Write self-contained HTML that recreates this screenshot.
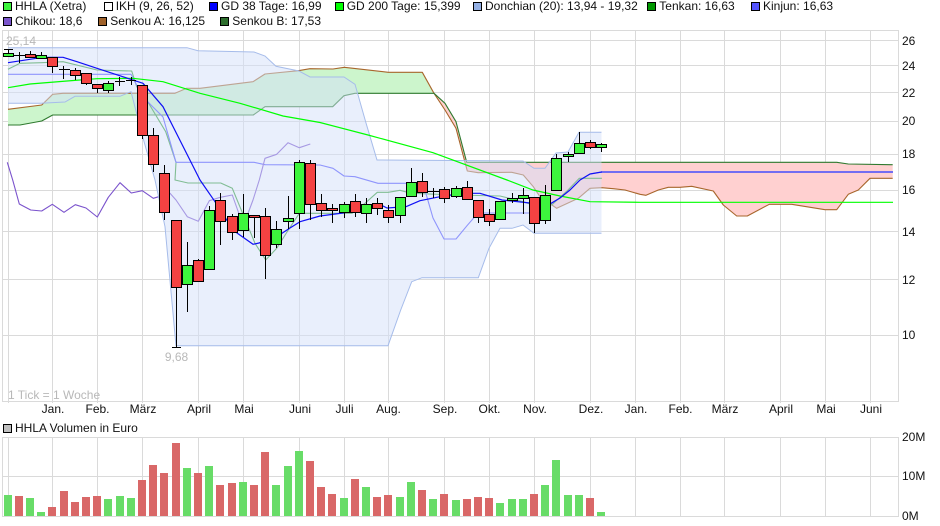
<!DOCTYPE html>
<html><head><meta charset="utf-8"><style>
html,body{margin:0;padding:0;background:#fff;width:940px;height:526px;overflow:hidden}
svg{display:block}
text{font-family:"Liberation Sans",sans-serif;font-size:12px;fill:#111}
.g{stroke:#dadada;stroke-width:1;fill:none;shape-rendering:crispEdges}
.m{text-anchor:middle}
.a{fill:#b8b8b8}
.sw{stroke:#000;stroke-width:1;shape-rendering:crispEdges}
.R rect{fill:#d96868;shape-rendering:crispEdges}
.V rect{fill:#68dc68;shape-rendering:crispEdges}
.cg rect{fill:#3df53d;stroke:#000;stroke-width:1;shape-rendering:crispEdges}
.cr rect{fill:#f44242;stroke:#000;stroke-width:1;shape-rendering:crispEdges}
</style></head><body>
<svg width="940" height="526" viewBox="0 0 940 526" xmlns="http://www.w3.org/2000/svg">
<rect width="940" height="526" fill="#fff"/>
<!-- legend -->
<rect class="sw" x="3.5" y="2.5" width="8" height="8" fill="#3df53d"/><text x="15" y="10">HHLA (Xetra)</text>
<rect class="sw" x="104.5" y="2.5" width="8" height="8" fill="#fff"/><text x="115.7" y="10">IKH (9, 26, 52)</text>
<rect class="sw" x="209.5" y="2.5" width="8" height="8" fill="#0000ff"/><text x="221" y="10">GD 38 Tage: 16,99</text>
<rect class="sw" x="335.5" y="2.5" width="8" height="8" fill="#00ff00"/><text x="346.7" y="10">GD 200 Tage: 15,399</text>
<rect class="sw" x="473.5" y="2.5" width="8" height="8" fill="#94b0e4"/><text x="485" y="10">Donchian (20): 13,94 - 19,32</text>
<rect class="sw" x="647.5" y="2.5" width="8" height="8" fill="#009900"/><text x="659.3" y="10">Tenkan: 16,63</text>
<rect class="sw" x="751.5" y="2.5" width="8" height="8" fill="#5555ff"/><text x="763" y="10">Kinjun: 16,63</text>
<rect class="sw" x="3.5" y="17.5" width="8" height="8" fill="#7b55cc"/><text x="15" y="25">Chikou: 18,6</text>
<rect class="sw" x="98.5" y="17.5" width="8" height="8" fill="#a0622a"/><text x="110.3" y="25">Senkou A: 16,125</text>
<rect class="sw" x="220.5" y="17.5" width="8" height="8" fill="#2d6e2d"/><text x="232.3" y="25">Senkou B: 17,53</text>
<!-- grid main -->
<path class="g" d="M2.5 30.5H898.5V401.5H2.5ZM2.5 40.5H898.5M2.5 65.5H898.5M2.5 92.5H898.5M2.5 121.5H898.5M2.5 154.5H898.5M2.5 190.5H898.5M2.5 231.5H898.5M2.5 279.5H898.5M2.5 335.5H898.5M8.5 30V403M52.5 30V403M97.5 30V403M142.5 30V403M198.5 30V403M243.5 30V403M299.5 30V403M344.5 30V403M388.5 30V403M444.5 30V403M489.5 30V403M534.5 30V403M590.5 30V403M635.5 30V403M680.5 30V403M724.5 30V403M780.5 30V403M825.5 30V403M870.5 30V403"/>
<!-- cloud -->
<polygon fill="#ccf5cc" points="8,109.3 41.7,105 52.7,94.3 63,93.3 175,93.3 186.7,88.3 200,88.3 253,81.7 265,74 298.3,70.7 310,68.7 333,69 344.3,67.3 388.3,72.3 422.3,72.3 434,93.3 355,93.3 344,95.7 332.7,106.7 265,106.7 253.3,115 52.7,115 41.7,121 20,125 8,125"/>
<polygon fill="#ffd0d0" points="434,93.3 445,103.3 456,121.7 466.7,162.3 836.7,162.3 848.3,164 892.7,164.7 892.7,178.3 870,178.3 858.3,190 848.3,194.3 836.7,209.7 825,209.7 791.7,204.3 769.3,204.3 747.3,216 736.7,216 723.3,205 713.3,191 691.7,186.3 680,187.3 668.3,187.3 658.3,190 646,195.3 640,194.3 625,190 613.3,188.7 601.7,187.7 590,188.3 578.3,198.3 556.7,208.3 540,196.7 533.3,186.7 523.3,175 511.7,172.3 478.3,172.7 467.3,171 456,128.3 445,110"/>
<g fill="none" stroke-width="1.1" stroke-linejoin="round">
<polyline stroke="#a8662c" points="8,109.3 41.7,105 52.7,94.3 63,93.3 175,93.3 186.7,88.3 200,88.3 253,81.7 265,74 298.3,70.7 310,68.7 333,69 344.3,67.3 388.3,72.3 422.3,72.3 434,93.3 445,110 456,128.3 467.3,171 478.3,172.7 511.7,172.3 523.3,175 533.3,186.7 540,196.7 556.7,208.3 578.3,198.3 590,188.3 601.7,187.7 613.3,188.7 625,190 640,194.3 646,195.3 658.3,190 668.3,187.3 680,187.3 691.7,186.3 713.3,191 723.3,205 736.7,216 747.3,216 769.3,204.3 791.7,204.3 825,209.7 836.7,209.7 848.3,194.3 858.3,190 870,178.3 892.7,178.3"/>
<polyline stroke="#2f7a2f" points="8,125 20,125 41.7,121 52.7,115 253.3,115 265,106.7 332.7,106.7 344,95.7 355,93.3 434,93.3 445,103.3 456,121.7 466.7,162.3 836.7,162.3 848.3,164 892.7,164.7"/>
<polyline stroke="#2e9a2e" points="8,69.3 20,63.3 41.7,62.7 63,61.7 97,70 131.7,71 136.7,86.7 146.7,100 165.7,131.7 176,162.3 175,180 188,183 220.7,183 232.3,188.3 243.3,215 255,243.3 265.7,260 276.7,248.3 288.3,230 299.3,213.3 320,213.3 352,213.3 365,203.3 377.3,192.3 388.3,192.3 400,190.3 411.3,193.3 456,195 500,196 523,201.7 533,205 551.7,205 568,190 579.3,178.3 601.7,178.3"/>
<polyline stroke="#4a4aff" points="8,74.3 131,74.3 143,97 163,117 176,162.3 254,162.3 265,164.7 320,165 333,168.3 344,176 355,176.7 378,183.3 423,183.3 433,218 444,239 456,239 467,225.7 478,213 523,213 534,213 550,204 560,198 570,190 580,180 590,174 601.7,172"/>
<polyline stroke="#7a52cc" points="7.3,162.3 12.7,180 19.3,204 30.7,210 41.7,211 52.3,204.3 64,212.3 75.3,204.7 86,208 97.3,217 108.3,197.3 120,182.7 131.3,193 142.3,190.7 153.3,198.3 170,193.3 176,200 187.3,216.7 198.3,221.3 209.3,200.7 220.3,197.3 232.3,195 243.3,226 253,200 259.3,180 265,158.3 276.7,154.3 288,142.7 299.3,147.7 310.3,144"/>
</g>
<!-- donchian -->
<polygon fill="#d3e0fa" fill-opacity=".5" points="8,47.7 187,47.7 198,50.7 254,52 265,56 276,66.3 299,71 310,77 344,77 355,84.3 366,123 377,160 523,161 534,168.3 545,168.3 556,153 568,152 579,132.3 601.5,132.3 601.5,233.3 534,233.3 523,225 512,228.3 500,228.3 489,248.3 478.3,277.7 422,277.7 411.7,281.7 400.7,310 388,345.7 176,345.7 165,226.7 155,180 143,138 131,91.7 120,96.3 75,96.3 65,102 41,103.3 8,103.3"/>
<g fill="none" stroke="#a6bcea" stroke-width="1">
<polyline points="8,47.7 187,47.7 198,50.7 254,52 265,56 276,66.3 299,71 310,77 344,77 355,84.3 366,123 377,160 523,161 534,168.3 545,168.3 556,153 568,152 579,132.3 601.5,132.3"/>
<polyline points="8,103.3 41,103.3 65,102 75,96.3 120,96.3 131,91.7 143,138 155,180 165,226.7 176,345.7 388,345.7 400.7,310 411.7,281.7 422,277.7 478.3,277.7 489,248.3 500,228.3 512,228.3 523,225 534,233.3 601.5,233.3"/>
</g>
<line x1="601" y1="172" x2="893" y2="172" stroke="#5f5ff6" stroke-width="1.7"/>
<!-- GD200 / GD38 -->
<polyline fill="none" stroke="#00ff00" stroke-width="1.2" points="8,87.7 30,84 67,81 97,78.7 133,78.3 163,81.7 200,93.3 240,103.3 283,116 320,122.5 368,135 433,152.7 507,180 533,190 560,196 590,201.7 640,202.3 893,202.3"/>
<polyline fill="none" stroke="#1010f5" stroke-width="1.2" stroke-linejoin="round" points="8,62.7 43,57.3 63,57.3 77,61.7 100,69.3 143,83.3 163,106.7 200,180 215,201.7 226.7,220 237,233 253,244.3 259,243 276.7,236.7 290,228 300,221.7 320,216 343,213 363,208 383,206 387,208 406,206.7 420,200.7 440,196.7 463,193.3 480,193.3 502,200 530,203 550,204 560,198 570,190 580,180 590,174 601.7,172"/>
<!-- wicks and doji -->
<path fill="none" stroke="#000" stroke-width="1" shape-rendering="crispEdges" d="M8.5 49V57M4 49.5H13M19.5 52V63M14 55.5H25M30.5 51V58M41.5 52V58M52.5 57V73M63.5 66V79M59 69.5H70M75.5 68V80M86.5 73V85M97.5 84V93M108.5 81V93M119.5 77V86M115 81.5H125M131.5 77V85M126 80.5H136M142.5 85V139M153.5 128V172M164.5 165V220M176.5 220V347M172 347.5H181M187.5 242V312M198.5 259V281M209.5 206V270M220.5 193V245M232.5 214V240M243.5 194V237M254.5 215V238M265.5 208V279M276.5 221V248M288.5 196V229M299.5 160V229M310.5 160V220M321.5 194V217M332.5 204V223M344.5 202V218M355.5 194V217M366.5 198V223M377.5 198V215M388.5 205V223M400.5 197V223M411.5 168V197M422.5 173V197M433.5 188V198M428 191.5H439M444.5 187V203M456.5 186V198M467.5 181V200M478.5 200V223M489.5 209V226M500.5 201V219M512.5 193V203M523.5 188V214M534.5 197V233M545.5 185V224M556.5 154V190M568.5 152V162M579.5 132V153M590.5 140V149M601.5 143V152"/>
<g class="cg">
<rect x="3.5" y="53.5" width="10" height="3"/><rect x="36.5" y="55.5" width="10" height="3"/><rect x="103.5" y="83.5" width="10" height="7"/><rect x="182.5" y="265.5" width="10" height="19"/><rect x="204.5" y="210.5" width="10" height="59"/><rect x="238.5" y="213.5" width="10" height="17"/><rect x="271.5" y="229.5" width="10" height="15"/><rect x="283.5" y="218.5" width="10" height="3"/><rect x="294.5" y="162.5" width="10" height="51"/><rect x="339.5" y="204.5" width="10" height="8"/><rect x="361.5" y="204.5" width="10" height="9"/><rect x="395.5" y="197.5" width="10" height="18"/><rect x="406.5" y="182.5" width="10" height="14"/><rect x="451.5" y="188.5" width="10" height="8"/><rect x="495.5" y="201.5" width="10" height="18"/><rect x="507.5" y="198.5" width="10" height="2"/><rect x="518.5" y="195.5" width="10" height="3"/><rect x="540.5" y="195.5" width="10" height="25"/><rect x="551.5" y="158.5" width="10" height="32"/><rect x="563.5" y="154.5" width="10" height="2"/><rect x="574.5" y="143.5" width="10" height="10"/><rect x="596.5" y="144.5" width="10" height="3"/>
</g>
<g class="cr">
<rect x="25.5" y="54.5" width="10" height="3"/><rect x="47.5" y="57.5" width="10" height="9"/><rect x="70.5" y="70.5" width="10" height="5"/><rect x="81.5" y="73.5" width="10" height="10"/><rect x="92.5" y="84.5" width="10" height="4"/><rect x="137.5" y="85.5" width="10" height="50"/><rect x="148.5" y="135.5" width="10" height="29"/><rect x="159.5" y="173.5" width="10" height="39"/><rect x="171.5" y="220.5" width="10" height="67"/><rect x="193.5" y="260.5" width="10" height="21"/><rect x="215.5" y="200.5" width="10" height="21"/><rect x="227.5" y="216.5" width="10" height="16"/><rect x="249.5" y="215.5" width="10" height="2"/><rect x="260.5" y="216.5" width="10" height="39"/><rect x="305.5" y="163.5" width="10" height="41"/><rect x="316.5" y="203.5" width="10" height="7"/><rect x="327.5" y="208.5" width="10" height="2"/><rect x="350.5" y="201.5" width="10" height="11"/><rect x="372.5" y="203.5" width="10" height="5"/><rect x="383.5" y="210.5" width="10" height="7"/><rect x="417.5" y="181.5" width="10" height="11"/><rect x="439.5" y="189.5" width="10" height="9"/><rect x="462.5" y="187.5" width="10" height="12"/><rect x="473.5" y="200.5" width="10" height="17"/><rect x="484.5" y="214.5" width="10" height="7"/><rect x="529.5" y="197.5" width="10" height="26"/><rect x="585.5" y="142.5" width="10" height="5"/>
</g>
<!-- annotations -->
<text class="a" x="6" y="45">25,14</text>
<text class="a m" x="176.5" y="361">9,68</text>
<text class="a" x="8" y="399">1 Tick = 1 Woche</text>
<!-- axis -->
<text x="902" y="45">26</text><text x="902" y="70">24</text><text x="902" y="97">22</text><text x="902" y="125">20</text><text x="902" y="158">18</text><text x="902" y="194">16</text><text x="902" y="236">14</text><text x="902" y="284">12</text><text x="902" y="339">10</text>
<text class="m" x="53" y="413">Jan.</text><text class="m" x="97.5" y="413">Feb.</text><text class="m" x="143" y="413">März</text><text class="m" x="199" y="413">April</text><text class="m" x="244" y="413">Mai</text><text class="m" x="300" y="413">Juni</text><text class="m" x="344.5" y="413">Juli</text><text class="m" x="388.5" y="413">Aug.</text><text class="m" x="445" y="413">Sep.</text><text class="m" x="489.5" y="413">Okt.</text><text class="m" x="535" y="413">Nov.</text><text class="m" x="591" y="413">Dez.</text><text class="m" x="636" y="413">Jan.</text><text class="m" x="680.5" y="413">Feb.</text><text class="m" x="725" y="413">März</text><text class="m" x="781" y="413">April</text><text class="m" x="826" y="413">Mai</text><text class="m" x="871" y="413">Juni</text>
<!-- volume -->
<rect class="sw" x="3.5" y="424.5" width="8" height="8" fill="#c0c0c0"/><text x="15" y="432">HHLA Volumen in Euro</text>
<path class="g" d="M2.5 437.5H898.5V516.5H2.5ZM2.5 476.5H898.5M8.5 437V517M52.5 437V517M97.5 437V517M142.5 437V517M198.5 437V517M243.5 437V517M299.5 437V517M344.5 437V517M388.5 437V517M444.5 437V517M489.5 437V517M534.5 437V517M590.5 437V517M635.5 437V517M680.5 437V517M724.5 437V517M780.5 437V517M825.5 437V517M870.5 437V517"/>
<g class="V">
<rect x="4" y="495" width="8" height="21"/><rect x="26" y="498" width="8" height="18"/><rect x="37" y="512" width="8" height="4"/><rect x="104" y="499" width="8" height="17"/><rect x="116" y="496" width="8" height="20"/><rect x="127" y="498" width="8" height="18"/><rect x="183" y="468" width="8" height="48"/><rect x="205" y="466" width="8" height="50"/><rect x="239" y="482" width="8" height="34"/><rect x="272" y="485" width="8" height="31"/><rect x="284" y="466" width="8" height="50"/><rect x="295" y="451" width="8" height="65"/><rect x="340" y="498" width="8" height="18"/><rect x="362" y="487" width="8" height="29"/><rect x="396" y="497" width="8" height="19"/><rect x="407" y="482" width="8" height="34"/><rect x="429" y="499" width="8" height="17"/><rect x="452" y="500" width="8" height="16"/><rect x="496" y="503" width="8" height="13"/><rect x="508" y="499" width="8" height="17"/><rect x="519" y="499" width="8" height="17"/><rect x="541" y="485" width="8" height="31"/><rect x="552" y="460" width="8" height="56"/><rect x="564" y="495" width="8" height="21"/><rect x="575" y="495" width="8" height="21"/><rect x="597" y="512" width="8" height="4"/>
</g>
<g class="R">
<rect x="15" y="496" width="8" height="20"/><rect x="48" y="507" width="8" height="9"/><rect x="60" y="491" width="8" height="25"/><rect x="71" y="502" width="8" height="14"/><rect x="82" y="497" width="8" height="19"/><rect x="93" y="496" width="8" height="20"/><rect x="138" y="480" width="8" height="36"/><rect x="149" y="465" width="8" height="51"/><rect x="160" y="473" width="8" height="43"/><rect x="172" y="443" width="8" height="73"/><rect x="194" y="473" width="8" height="43"/><rect x="216" y="485" width="8" height="31"/><rect x="228" y="483" width="8" height="33"/><rect x="250" y="485" width="8" height="31"/><rect x="261" y="452" width="8" height="64"/><rect x="306" y="461" width="8" height="55"/><rect x="317" y="487" width="8" height="29"/><rect x="328" y="494" width="8" height="22"/><rect x="351" y="479" width="8" height="37"/><rect x="373" y="497" width="8" height="19"/><rect x="384" y="495" width="8" height="21"/><rect x="418" y="490" width="8" height="26"/><rect x="440" y="494" width="8" height="22"/><rect x="463" y="499" width="8" height="17"/><rect x="474" y="497" width="8" height="19"/><rect x="485" y="498" width="8" height="18"/><rect x="530" y="494" width="8" height="22"/><rect x="586" y="498" width="8" height="18"/>
</g>
<text x="902" y="441">20M</text><text x="902" y="480">10M</text><text x="902" y="520">0M</text>
</svg>
</body></html>
